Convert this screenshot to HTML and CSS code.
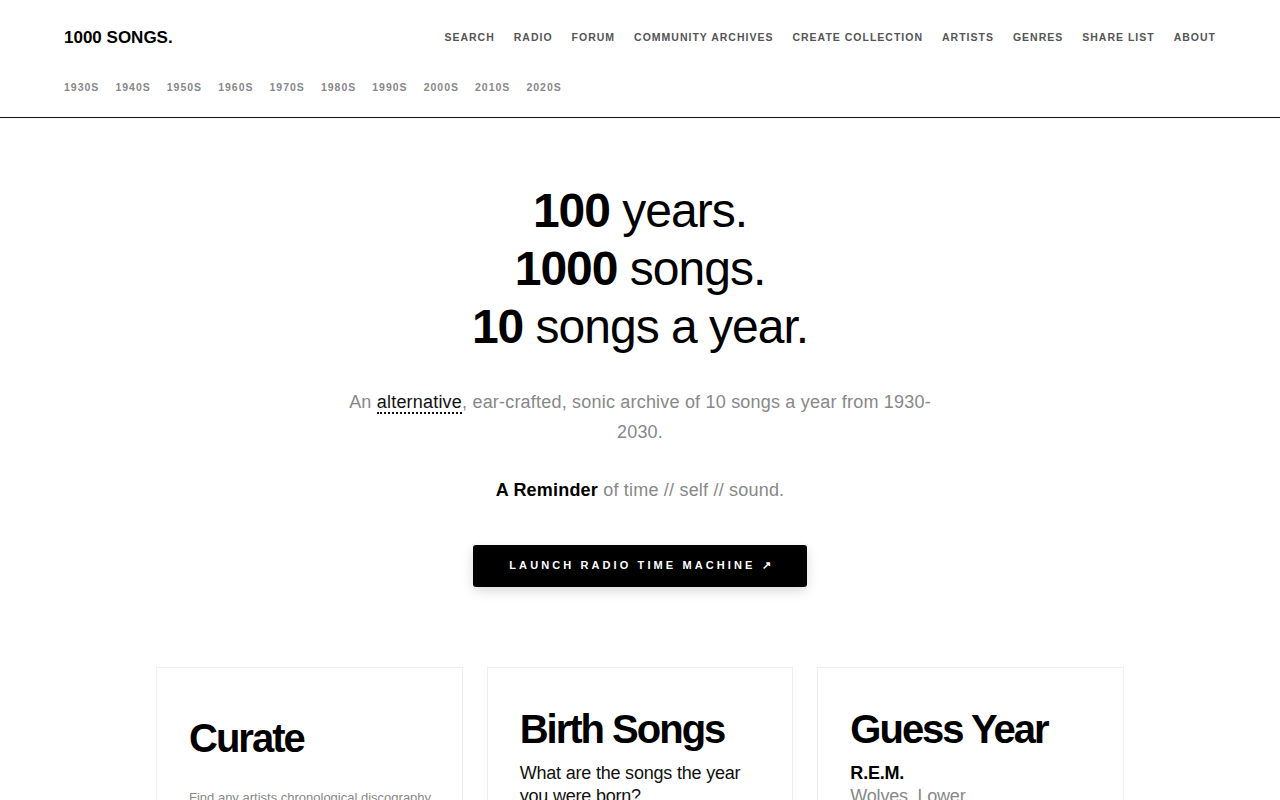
FILE: index.html
```html
<!DOCTYPE html>
<html lang="en">
<head>
    <meta charset="UTF-8">
    <meta name="viewport" content="width=device-width, initial-scale=1.0">
    <title>1000 Songs</title>
    <link rel="stylesheet" href="styles.css">
</head>
<body>
    <header class="site-header">
        <div class="header-top">
            <a class="logo" href="#">1000 SONGS.</a>
            <nav class="main-nav">
                <a href="#">Search</a>
                <a href="#">Radio</a>
                <a href="#">Forum</a>
                <a href="#">Community Archives</a>
                <a href="#">Create Collection</a>
                <a href="#">Artists</a>
                <a href="#">Genres</a>
                <a href="#">Share List</a>
                <a href="#">About</a>
            </nav>
        </div>
        <nav class="decades">
            <a href="#">1930s</a>
            <a href="#">1940s</a>
            <a href="#">1950s</a>
            <a href="#">1960s</a>
            <a href="#">1970s</a>
            <a href="#">1980s</a>
            <a href="#">1990s</a>
            <a href="#">2000s</a>
            <a href="#">2010s</a>
            <a href="#">2020s</a>
        </nav>
    </header>

    <section class="hero">
        <h1>
            <strong>100</strong> years.<br>
            <strong>1000</strong> songs.<br>
            <strong>10</strong> songs a year.
        </h1>
        <p class="lead">An <abbr title="alternative">alternative</abbr>, ear-crafted, sonic archive of 10 songs a year from 1930-2030.</p>
        <p class="lead"><b>A Reminder</b> of time // self // sound.</p>
        <a class="launch" href="#">Launch Radio Time Machine &#8599;</a>
    </section>

    <section class="cards">
        <div class="card">
            <h2 class="curate">Curate</h2>
            <p class="note">Find any artists chronological discography and build a list of your own.</p>
        </div>
        <div class="card">
            <h2>Birth Songs</h2>
            <p class="text">What are the songs the year you were born?</p>
        </div>
        <div class="card">
            <h2>Guess Year</h2>
            <p class="text"><b>R.E.M.</b></p>
            <p class="text muted">Wolves, Lower</p>
        </div>
    </section>
</body>
</html>
```

FILE: styles.css
```css
body {
    font-family: 'Liberation Sans', Arial, sans-serif;
    margin: 0;
    padding: 0;
    background: #fff;
    color: #111;
}
a {
    text-decoration: none;
}
.site-header {
    padding: 24px 64px 23px;
    border-bottom: 1px solid #111;
}
.header-top {
    display: flex;
    justify-content: space-between;
    align-items: center;
    height: 26px;
}
.logo {
    font-size: 17px;
    font-weight: bold;
    color: #000;
    margin-top: 1px;
}
.main-nav {
    display: flex;
    gap: 19px;
}
.main-nav a {
    font-size: 10.5px;
    font-weight: bold;
    text-transform: uppercase;
    letter-spacing: 1px;
    color: #555;
}
.decades {
    display: flex;
    gap: 16px;
    margin-top: 30px;
    height: 14px;
    align-items: center;
}
.decades a {
    font-size: 10.5px;
    font-weight: bold;
    text-transform: uppercase;
    letter-spacing: 1px;
    color: #888;
}
.hero {
    text-align: center;
    padding-top: 64px;
}
h1 {
    font-size: 48px;
    line-height: 58px;
    font-weight: normal;
    margin: 0 0 31px;
    color: #000;
    letter-spacing: -1px;
}
.lead {
    font-size: 18px;
    line-height: 30px;
    letter-spacing: 0.2px;
    color: #888;
    max-width: 600px;
    margin: 0 auto 28px;
}
.lead b {
    color: #000;
}
abbr {
    color: #111;
    text-decoration: none;
    border-bottom: 2px dotted #111;
}
.launch {
    display: inline-block;
    margin-top: 12px;
    background: #000;
    color: #fff;
    font-size: 11px;
    font-weight: bold;
    letter-spacing: 3.1px;
    text-transform: uppercase;
    padding: 14px 33px 15px 36px;
    border-radius: 3px;
    box-shadow: 0 4px 12px rgba(0, 0, 0, 0.15);
}
.cards {
    display: grid;
    grid-template-columns: repeat(3, 1fr);
    gap: 24px;
    width: 968px;
    margin: 80px auto 0;
}
.card {
    border: 1px solid #eee;
    padding: 37px 26px 37px 32px;
    min-height: 300px;
}
.card h2 {
    font-size: 40px;
    line-height: 48px;
    letter-spacing: -2px;
    margin: 0 0 9px;
    color: #000;
}
.card h2.curate {
    margin-top: 9px;
    margin-bottom: 26px;
}
.text {
    font-size: 18px;
    line-height: 23px;
    letter-spacing: -0.2px;
    margin: 0;
    color: #111;
}
.text b {
    color: #000;
}
.muted {
    color: #888;
}
.note {
    font-size: 13px;
    line-height: 20px;
    color: #888;
    margin: 0;
}
```
